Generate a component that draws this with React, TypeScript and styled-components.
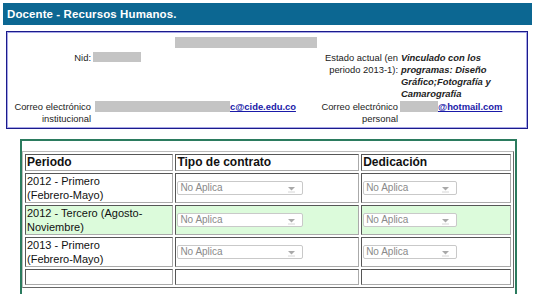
import React from "react";
import styled, { createGlobalStyle } from "styled-components";

interface Periodo {
  lines: string[];
  highlight?: boolean;
}

const periodos: Periodo[] = [
  { lines: ["2012 - Primero", "(Febrero-Mayo)"] },
  { lines: ["2012 - Tercero (Agosto-", "Noviembre)"], highlight: true },
  { lines: ["2013 - Primero", "(Febrero-Mayo)"] },
];

const GlobalStyle = createGlobalStyle`
  body {
    margin: 0;
    background: #fff;
    font-family: "Liberation Sans", Arial, sans-serif;
  }
`;

const Page = styled.div`
  width: 534px;
  height: 294px;
  overflow: hidden;
`;

const TitleBar = styled.div`
  margin: 3px 2px 0 3px;
  height: 22px;
  line-height: 22px;
  padding-left: 4px;
  background: #0c6792;
  color: #fff;
  font-weight: bold;
  font-size: 11.5px;
  letter-spacing: 0.1px;
`;

const InfoBox = styled.div`
  margin: 6px 0 0 6px;
  width: 518px;
  height: 91px;
  border: 1px solid #1a1a8c;
  box-shadow: inset 0 0 0 1px #a8a8e8;
  padding: 5px 1px 0 1px;
`;

const NameRow = styled.div`
  display: flex;
  padding-left: 167px;
  margin-bottom: 4px;
`;

const Hidden = styled.span<{ $w: number; $h?: number }>`
  display: inline-block;
  width: ${(p) => p.$w}px;
  height: ${(p) => p.$h ?? 11}px;
  background: #c4c4c4;
  vertical-align: top;
`;

const InfoGrid = styled.div`
  display: grid;
  grid-template-columns: 85px 1fr 98px 126px;
  row-gap: 1px;
  font-size: 9.4px;
  line-height: 12px;
  color: #222;
`;

const Label = styled.div`
  text-align: right;
  padding-right: 2px;
`;

const Value = styled.div<{ $pad?: number }>`
  padding-left: ${(p) => p.$pad ?? 0}px;
  display: flex;
  align-items: flex-start;
`;

const Estado = styled.div`
  font-weight: bold;
  font-style: italic;
  padding-left: 1px;
`;

const Mail = styled.a`
  color: #1a1aa8;
  font-weight: bold;
  text-decoration: underline;
`;

const ContractBox = styled.div`
  margin: 10px 0 0 20px;
  width: 493px;
  height: 159px;
  border: 2px solid #2b7b5e;
  border-bottom: none;
  padding: 10px 0 0 0;
`;

const Table = styled.table`
  width: 492px;
  border: 1px outset #bbb;
  border-spacing: 2px;
  font-size: 11px;
  color: #111;
`;

const Th = styled.th<{ $w: number }>`
  width: ${(p) => p.$w}px;
  border: 1px inset #aaa;
  padding: 1px 1px;
  height: 13px;
  text-align: left;
  font-size: 12px;
  line-height: 13px;
`;

const Td = styled.td<{ $hl?: boolean }>`
  border: 1px inset #aaa;
  padding: 0 1px;
  height: 28px;
  line-height: 14px;
  vertical-align: middle;
  background: ${(p) => (p.$hl ? "#dcfbdb" : "transparent")};
`;

const EmptyTd = styled.td`
  border: 1px inset #aaa;
  height: 12px;
`;

const Select = styled.div<{ $w: number }>`
  position: relative;
  width: ${(p) => p.$w}px;
  height: 14px;
  border: 1px solid #c9c9c9;
  border-radius: 2px;
  background: #fff;
  color: #8a8a8a;
  font-size: 10px;
  line-height: 12px;
  padding-left: 2px;
  box-sizing: border-box;
`;

const Arrow = styled.svg`
  position: absolute;
  right: 6px;
  top: 4px;
`;

const FakeSelect: React.FC<{ width: number }> = ({ width }) => (
  <Select $w={width}>
    No Aplica
    <Arrow width="9" height="7" viewBox="0 0 9 7">
      <path d="M1 1h7L4.5 4.5z" fill="#a9a9a9" />
      <path d="M1 6h7" stroke="#d6d6d6" strokeWidth="1" />
    </Arrow>
  </Select>
);

const App: React.FC = () => {
  return (
    <Page>
      <GlobalStyle />
      <TitleBar>Docente - Recursos Humanos.</TitleBar>
      <InfoBox>
        <NameRow>
          <Hidden $w={142} />
        </NameRow>
        <InfoGrid>
          <Label>Nid:</Label>
          <Value>
            <Hidden $w={48} $h={10} />
          </Value>
          <Label>Estado actual (en periodo 2013-1):</Label>
          <Estado>
            Vinculado con los programas: Diseño Gráfico;Fotografía y
            Camarografía
          </Estado>
          <Label>Correo electrónico institucional</Label>
          <Value $pad={2}>
            <Hidden $w={135} />
            <Mail href="#">c@cide.edu.co</Mail>
          </Value>
          <Label>Correo electrónico personal</Label>
          <Value>
            <Hidden $w={38} />
            <Mail href="#">@hotmail.com</Mail>
          </Value>
        </InfoGrid>
      </InfoBox>
      <ContractBox>
        <Table>
          <thead>
            <tr>
              <Th $w={148}>Periodo</Th>
              <Th $w={182}>Tipo de contrato</Th>
              <Th $w={148}>Dedicación</Th>
            </tr>
          </thead>
          <tbody>
            {periodos.map((p) => (
              <tr key={p.lines.join(" ")}>
                <Td $hl={p.highlight}>
                  {p.lines[0]}
                  <br />
                  {p.lines[1]}
                </Td>
                <Td $hl={p.highlight}>
                  <FakeSelect width={126} />
                </Td>
                <Td $hl={p.highlight}>
                  <FakeSelect width={94} />
                </Td>
              </tr>
            ))}
            <tr>
              <EmptyTd />
              <EmptyTd />
              <EmptyTd />
            </tr>
          </tbody>
        </Table>
      </ContractBox>
    </Page>
  );
};

export default App;
